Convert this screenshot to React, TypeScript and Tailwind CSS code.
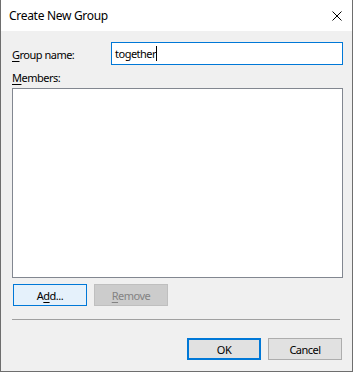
export default function App() {
  const font = { fontFamily: '"Segoe UI", "Noto Sans", "Liberation Sans", sans-serif' }
  return (
    <div className="w-[353px] h-[372px] flex flex-col border-x border-b border-[#6e6e6e] bg-[#f0f0f0] text-[11px] tracking-[-0.5px] text-black" style={font}>
      <div className="h-[31px] shrink-0 bg-white flex items-center justify-between pl-[8px] pr-[10px]">
        <span className="text-[12px] tracking-[-0.3px] leading-none">Create New Group</span>
        <svg width="10" height="10" viewBox="0 0 10 10">
          <path d="M0.5 0.5 L9.5 9.5 M9.5 0.5 L0.5 9.5" stroke="#000" strokeWidth="1" fill="none" />
        </svg>
      </div>
      <div className="flex flex-col pl-[11px] pr-[9px]">
        <div className="mt-[11px] h-[23px] flex items-center">
          <label className="w-[99px] shrink-0 leading-none pt-[2px]">
            <u className="underline-offset-2">G</u>roup name:
          </label>
          <div className="flex-1 h-full border border-[#0078d7] bg-white flex items-center pl-[3px]">
            <span className="leading-none">together</span>
            <span className="w-px h-[15px] bg-black" />
          </div>
        </div>
        <div className="mt-[7px] h-[16px] flex items-start leading-none">
          <span>
            <u className="underline-offset-2">M</u>embers:
          </span>
        </div>
        <div className="h-[190px] border border-[#828790] bg-white" />
        <div className="mt-[6px] flex gap-[7px] pl-px">
          <button className="w-[74px] h-[22px] border border-[#0078d7] bg-[#e5f1fb] leading-none">
            A<u className="underline-offset-2">d</u>d...
          </button>
          <button className="w-[74px] h-[22px] border border-[#bfbfbf] bg-[#cccccc] text-[#838383] leading-none">
            <u className="underline-offset-2">R</u>emove
          </button>
        </div>
        <div className="mt-[13px] h-px w-[328px] bg-[#a0a0a0]" />
        <div className="mt-[18px] flex justify-end gap-[7px] pr-px">
          <button className="w-[74px] h-[22px] border-2 border-[#0078d7] bg-[#e1e1e1] leading-none">OK</button>
          <button className="w-[74px] h-[22px] border border-[#adadad] bg-[#e1e1e1] leading-none">Cancel</button>
        </div>
      </div>
    </div>
  )
}
